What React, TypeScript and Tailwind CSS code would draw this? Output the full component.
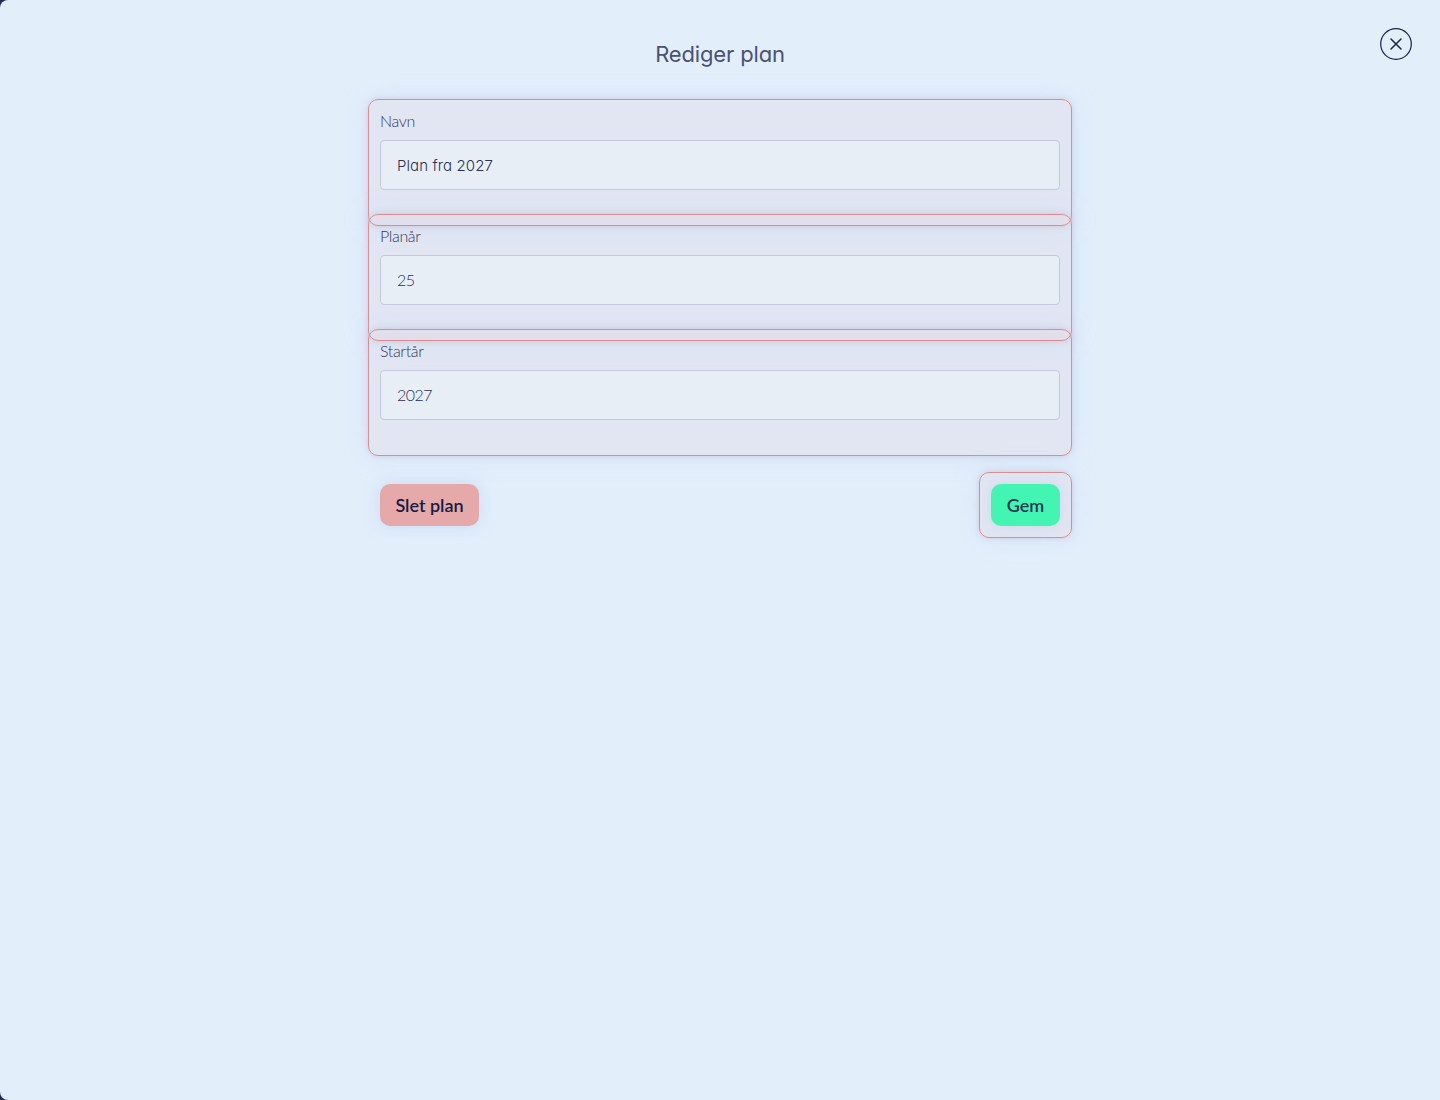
type Field = {
  label: string;
  value: string;
  valueClass: string;
};

const fields: Field[] = [
  {
    label: "Navn",
    value: "Plan fra 2027",
    valueClass:
      "font-['Inter'] text-[15px] font-light tracking-[0.1px] [font-feature-settings:'cv11']",
  },
  {
    label: "Planår",
    value: "25",
    valueClass: "pb-0.5 font-['Lato'] text-base font-light tracking-[-0.5px]",
  },
  {
    label: "Startår",
    value: "2027",
    valueClass: "pb-0.5 font-['Lato'] text-base font-light tracking-[-0.5px]",
  },
];

function Highlight() {
  return (
    <div className="pointer-events-none absolute -inset-3 rounded-[10px] border border-[#dc8d92] bg-[#e06060]/[0.05] shadow-[0_0_6px_rgba(180,130,160,0.28),0_0_24px_rgba(170,210,245,0.25)]" />
  );
}

function TextField({ label, value, valueClass }: Field) {
  return (
    <div className="relative h-[103px]">
      <Highlight />
      <label className="relative block">
        <span className="block h-[29px] font-['Lato'] text-base leading-5 font-light tracking-[-0.35px] text-[#33365f]">
          {label}
        </span>
        <input
          className={`block h-[50px] w-full rounded-[4px] border border-[#c6c9e1] bg-[#e7eef6] px-4 text-[#2a2f55] outline-none ${valueClass}`}
          defaultValue={value}
        />
      </label>
    </div>
  );
}

export default function App() {
  return (
    <div className="h-[1100px] overflow-hidden bg-[#26295c] font-['Lato',sans-serif]">
      <div className="relative h-full rounded-l-[8px] bg-[#e3eefb]">
        <button className="absolute top-7 right-7" aria-label="Luk">
          <svg width="32" height="32" viewBox="0 0 32 32" fill="none" stroke="#1b1f4b">
            <circle cx="16" cy="16" r="15.3" strokeWidth="1.2" />
            <path d="M11 11l10 10M21 11L11 21" strokeWidth="1.5" strokeLinecap="round" />
          </svg>
        </button>

        <div className="mx-auto w-[680px] pt-[38px]">
          <h1 className="h-[73px] text-center font-['Inter'] text-[22px] leading-8 font-normal tracking-[-0.15px] text-[#4a5079] [font-feature-settings:'cv11']">
            Rediger plan
          </h1>

          <form className="isolate flex flex-col gap-3">
            {fields.map((field) => (
              <TextField key={field.label} {...field} />
            ))}

            <div className="mt-7 flex justify-between">
              <button
                type="button"
                className="h-[42px] w-[99px] rounded-[10px] bg-[#e6a9aa] text-lg leading-none font-semibold text-[#161b43] shadow-[0_0_16px_rgba(170,205,240,0.5)]"
              >
                Slet plan
              </button>
              <div className="relative">
                <Highlight />
                <button
                  type="button"
                  className="relative h-[42px] w-[69px] rounded-[10px] bg-[#43f5b2] text-lg leading-none font-semibold text-[#213653] shadow-[0_0_12px_rgba(190,200,230,0.5)]"
                >
                  Gem
                </button>
              </div>
            </div>
          </form>
        </div>
      </div>
    </div>
  );
}
